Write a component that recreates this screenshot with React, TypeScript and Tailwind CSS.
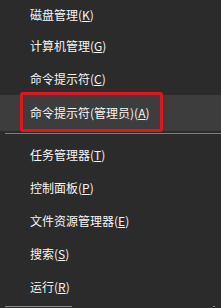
import React from 'react';

type Item = { label: string; key: string };

const topItems: Item[] = [
  { label: '磁盘管理', key: 'K' },
  { label: '计算机管理', key: 'G' },
  { label: '命令提示符', key: 'C' },
];

const bottomItems: Item[] = [
  { label: '任务管理器', key: 'T' },
  { label: '控制面板', key: 'P' },
  { label: '文件资源管理器', key: 'E' },
  { label: '搜索', key: 'S' },
  { label: '运行', key: 'R' },
];

function Label({ item }: { item: Item }) {
  return (
    <span className="whitespace-nowrap">
      {item.label}(<span className="underline underline-offset-[1px] decoration-1">{item.key}</span>)
    </span>
  );
}

export default function App() {
  return (
    <div
      className="w-[221px] h-[308px] overflow-hidden bg-[#2b2b2b] text-[#f5f5f5] text-[12px] leading-none"
      style={{ fontFamily: '"Noto Sans CJK SC", "Noto Sans", sans-serif' }}
    >
      {/* first row is cut off by the screenshot */}
      <div className="h-[29px] flex items-center pl-[30px]">
        <Label item={topItems[0]} />
      </div>
      <div className="h-[33px] flex items-center pl-[30px]">
        <Label item={topItems[1]} />
      </div>
      <div className="h-[33px] flex items-center pl-[30px]">
        <Label item={topItems[2]} />
      </div>

      {/* highlighted row with red marker box */}
      <div className="relative h-[36px] flex items-center pl-[30px] bg-[#3d3d3d]">
        <span className="whitespace-nowrap">
          命令提示符(管理员)(<span className="underline underline-offset-[1px] decoration-1">A</span>)
        </span>
        <div className="absolute left-[20px] top-[-3px] w-[143px] h-[40px] border-[3px] border-[#e3151c] rounded-[3px]" />
      </div>

      <div className="h-[2px]" />
      <div className="h-px ml-[5px] bg-[#7c7c7c]" />
      <div className="h-[4px]" />

      {bottomItems.map((item) => (
        <div key={item.key} className="h-[33px] flex items-center pl-[30px]">
          <Label item={item} />
        </div>
      ))}

      <div className="h-[3px]" />
      <div className="flex items-center">
        <div className="ml-[5px] w-[67px] h-px bg-[#8a8a8a]" />
        <div className="ml-auto mr-[6px] w-[2px] h-px bg-[#8a8a8a]" />
      </div>
    </div>
  );
}
